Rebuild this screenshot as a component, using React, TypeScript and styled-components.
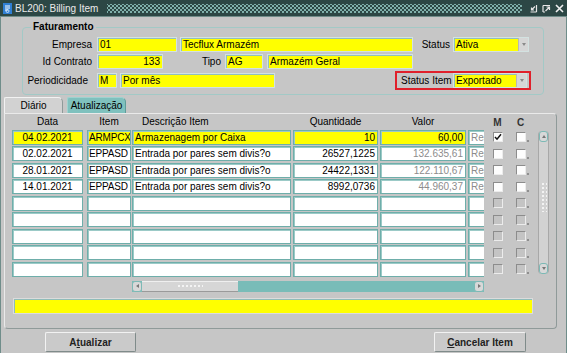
import React from 'react';
import styled, { createGlobalStyle } from 'styled-components';

const GlobalStyle = createGlobalStyle`
  html, body {
    margin: 0;
    padding: 0;
    background: #c6c6c6;
  }
  body {
    font-family: 'Liberation Sans', Arial, sans-serif;
    font-size: 10px;
    color: #000;
  }
  * {
    box-sizing: border-box;
  }
`;

const Window = styled.div`
  width: 567px;
  height: 353px;
  overflow: hidden;
  display: flex;
  flex-direction: column;
  background: #c6c6c6;
`;

const TitleBar = styled.div`
  height: 17px;
  flex: none;
  display: flex;
  align-items: center;
  gap: 3px;
  padding: 0 3px;
  background: #2c4745;
  border-bottom: 1px solid #6f8d8a;
  color: #eaeaea;
`;

const TitleText = styled.span`
  font-size: 10px;
  white-space: nowrap;
  margin-right: 6px;
`;

const TitleDots = styled.div`
  flex: 1;
  height: 9px;
  background-image: radial-gradient(circle, #7fb0ab 0.9px, transparent 1.1px),
    radial-gradient(circle, #7fb0ab 0.9px, transparent 1.1px);
  background-size: 4px 4px;
  background-position: 0 0, 2px 2px;
`;

const TitleButtons = styled.div`
  display: flex;
  gap: 4px;
  margin-left: 4px;
`;

const Body = styled.div`
  flex: 1;
  display: flex;
  flex-direction: column;
  border-left: 1px solid #6f8d8a;
  border-right: 1px solid #6f8d8a;
`;

const Group = styled.fieldset`
  margin: 4px 0 0 21px;
  width: 522px;
  min-width: 0;
  padding: 0 0 4px 0;
  border: 1px solid #a2c9c6;
  border-radius: 4px;
  display: flex;
  flex-direction: column;
  gap: 2px;
`;

const Legend = styled.legend`
  margin-left: 8px;
  padding: 0 2px;
  font-weight: bold;
  line-height: 12px;
`;

const FormRow = styled.div<{ $first?: boolean; $h?: number }>`
  display: flex;
  align-items: center;
  height: ${p => p.$h ?? 15}px;
  margin-top: ${p => (p.$first ? 4 : 0)}px;
`;

const Label = styled.span<{ $w?: number; $gap?: number }>`
  width: ${p => (p.$w ? `${p.$w}px` : 'auto')};
  flex: none;
  text-align: right;
  padding-right: ${p => p.$gap ?? 5}px;
  white-space: nowrap;
  line-height: 13px;
`;

const Field = styled.div<{ $w: number; $bg?: string; $align?: string; $ml?: number; $muted?: boolean }>`
  width: ${p => p.$w}px;
  height: 15px;
  flex: none;
  margin-left: ${p => p.$ml ?? 0}px;
  padding: 0 2px;
  background: ${p => p.$bg ?? '#fff'};
  border: 1px solid #d3e2e1;
  box-shadow: inset 1px 1px 0 #92bfbc;
  text-align: ${p => p.$align ?? 'left'};
  line-height: 13px;
  white-space: nowrap;
  overflow: hidden;
  color: ${p => (p.$muted ? '#8c8c8c' : '#000')};
`;

const Select = styled.div<{ $w: number }>`
  width: ${p => p.$w}px;
  height: 15px;
  flex: none;
  display: flex;
  border: 1px solid #d3e2e1;
  box-shadow: inset 1px 1px 0 #92bfbc;
  background: #ffff00;
`;

const SelectValue = styled.span`
  flex: 1;
  padding: 0 2px;
  line-height: 13px;
`;

const SelectArrow = styled.span`
  width: 10px;
  background: #d6d6d6;
  border-left: 1px solid #b8b8b8;
  display: flex;
  align-items: center;
  justify-content: center;
  &::after {
    content: '';
    border-left: 2.5px solid transparent;
    border-right: 2.5px solid transparent;
    border-top: 3px solid #8a8a8a;
  }
`;

const Highlight = styled.div`
  margin-left: 120px;
  width: 136px;
  height: 19px;
  display: flex;
  align-items: center;
  padding-left: 4px;
  border: 2px solid #e0202b;
`;

const TabStrip = styled.div`
  display: flex;
  gap: 4px;
  margin: 2px 0 0 3px;
  height: 16px;
`;

const Tab = styled.div<{ $active?: boolean }>`
  width: 59px;
  height: 16px;
  display: flex;
  align-items: center;
  justify-content: center;
  border-radius: 2px 5px 0 0;
  background: ${p => (p.$active ? '#d2d2d2' : '#7fc1be')};
  border-top: 1px solid ${p => (p.$active ? '#f2f2f2' : '#9fd2cf')};
  border-left: 1px solid ${p => (p.$active ? '#f2f2f2' : '#9fd2cf')};
  border-right: 1px solid ${p => (p.$active ? '#8f9a99' : '#5e9c99')};
  line-height: 13px;
`;

const TabPanel = styled.div`
  margin-left: 3px;
  width: 553px;
  height: 216px;
  padding: 2px 0 0 7px;
  border: 1px solid #eaeaea;
  border-right-color: #8f9a99;
  border-bottom-color: #8f9a99;
  border-radius: 0 4px 4px 4px;
  display: flex;
  flex-direction: column;
`;

const GridArea = styled.div`
  display: flex;
  align-items: flex-start;
`;

const Block = styled.div`
  display: flex;
  flex-direction: column;
  margin-left: 1px;
`;

const Grid = styled.div<{ $cols: string; $gap: number }>`
  display: grid;
  grid-template-columns: ${p => p.$cols};
  grid-template-rows: 12px repeat(9, 15px);
  column-gap: ${p => p.$gap}px;
  row-gap: 1.5px;
`;

const Head = styled.div<{ $align?: string; $pad?: number }>`
  text-align: ${p => p.$align ?? 'center'};
  padding-left: ${p => p.$pad ?? 0}px;
  line-height: 11px;
  white-space: nowrap;
`;

const Cell = styled.div<{ $yellow?: boolean; $align?: string; $muted?: boolean; $clip?: boolean; $tight?: boolean }>`
  height: 15px;
  padding: 0 ${p => (p.$tight ? '0 0 1px' : '2px')};
  background: ${p => (p.$yellow ? '#ffff00' : '#fff')};
  border: 1px solid #6eaeaa;
  border-right-width: ${p => (p.$clip ? 0 : 1)}px;
  box-shadow: inset 1px 1px 0 #9ccac7;
  text-align: ${p => p.$align ?? 'left'};
  letter-spacing: ${p => (p.$tight ? '-0.15px' : 'normal')};
  line-height: 13px;
  white-space: nowrap;
  overflow: hidden;
  color: ${p => (p.$muted ? '#8c8c8c' : '#000')};
`;

const HScroll = styled.div`
  margin-top: 4px;
  width: 352px;
  height: 11px;
  display: flex;
  background: #79bcb8;
`;

const ScrollButton = styled.div<{ $dir: 'left' | 'right' | 'up' | 'down' }>`
  width: ${p => (p.$dir === 'left' || p.$dir === 'right' ? '10px' : '100%')};
  height: ${p => (p.$dir === 'left' || p.$dir === 'right' ? '100%' : '11px')};
  flex: none;
  background: #d8d8d8;
  border: 1px solid #7cb9b5;
  border-radius: 3px;
  display: flex;
  align-items: center;
  justify-content: center;
  &::after {
    content: '';
    ${p =>
      p.$dir === 'left'
        ? 'border-top: 2.5px solid transparent; border-bottom: 2.5px solid transparent; border-right: 3px solid #777;'
        : p.$dir === 'right'
        ? 'border-top: 2.5px solid transparent; border-bottom: 2.5px solid transparent; border-left: 3px solid #777;'
        : p.$dir === 'up'
        ? 'border-left: 2.5px solid transparent; border-right: 2.5px solid transparent; border-bottom: 3px solid #777;'
        : 'border-left: 2.5px solid transparent; border-right: 2.5px solid transparent; border-top: 3px solid #777;'}
  }
`;

const HThumb = styled.div`
  width: 96px;
  background: #d6d6d6;
  border-top: 1px solid #efefef;
  border-bottom: 1px solid #9a9a9a;
  display: flex;
  align-items: center;
  justify-content: center;
`;

const Grip = styled.div<{ $vertical?: boolean }>`
  width: ${p => (p.$vertical ? 6 : 26)}px;
  height: ${p => (p.$vertical ? 30 : 5)}px;
  background-image: radial-gradient(circle, #f4f4f4 0.7px, transparent 0.9px);
  background-size: 4px 4px;
`;

const HTrack = styled.div`
  flex: 1;
`;

const CheckGrid = styled.div`
  margin-left: 2px;
  display: grid;
  grid-template-columns: 23px 23px;
  grid-template-rows: 12px repeat(9, 15px);
  row-gap: 1.5px;
  justify-items: center;
  align-items: center;
`;

const CheckHead = styled.div`
  font-weight: bold;
  color: #333;
  line-height: 11px;
`;

const CheckBox = styled.span<{ $empty?: boolean; $dot?: boolean }>`
  position: relative;
  width: 10px;
  height: 10px;
  display: flex;
  align-items: center;
  justify-content: center;
  background: ${p => (p.$empty ? '#c4c4c4' : '#fdfdfd')};
  border-top: 1px solid #8c8c8c;
  border-left: 1px solid #8c8c8c;
  border-bottom: 1px solid #ececec;
  border-right: 1px solid #ececec;
  &::after {
    content: '';
    display: ${p => (p.$dot ? 'block' : 'none')};
    position: absolute;
    right: -4px;
    bottom: -1px;
    width: 2px;
    height: 2px;
    background: #8e8e8e;
  }
`;

const VScroll = styled.div`
  margin: 15px 0 0 6px;
  width: 11px;
  height: 143px;
  display: flex;
  flex-direction: column;
  background: #d2d2d2;
  border-left: 1px solid #a8a8a8;
  border-right: 1px solid #a8a8a8;
  border-radius: 4px;
`;

const VTrack = styled.div`
  flex: 1;
  display: flex;
  justify-content: center;
  padding-top: 40px;
`;

const MessageBar = styled.div`
  margin: 6px 0 0 1px;
  width: 520px;
  height: 16px;
  background: #ffff00;
  border: 1px solid #dcdcdc;
  box-shadow: inset 1px 1px 0 #8fbcb9;
`;

const ButtonRow = styled.div`
  display: flex;
  justify-content: space-between;
  margin: 3px 40px 0 44px;
`;

const Button = styled.button<{ $w?: number }>`
  width: ${p => p.$w ?? 91}px;
  height: 20px;
  padding: 0;
  font-family: 'Liberation Sans', Arial, sans-serif;
  font-size: 10px;
  font-weight: bold;
  color: #222;
  background: #cacaca;
  border-top: 1px solid #f2f2f2;
  border-left: 1px solid #f2f2f2;
  border-bottom: 1px solid #7f8b8a;
  border-right: 1px solid #7f8b8a;
  border-radius: 2px;
`;

type Row = {
  date: string;
  item: string;
  desc: string;
  qty: string;
  valor: string;
  m?: boolean;
  current?: boolean;
};

const DESC = 'Entrada por pares sem divis?o';

const rows: Row[] = [
  { date: '04.02.2021', item: 'ARMPCX', desc: 'Armazenagem por Caixa', qty: '10', valor: '60,00', m: true, current: true },
  { date: '02.02.2021', item: 'EPPASD', desc: DESC, qty: '26527,1225', valor: '132.635,61' },
  { date: '28.01.2021', item: 'EPPASD', desc: DESC, qty: '24422,1331', valor: '122.110,67' },
  { date: '14.01.2021', item: 'EPPASD', desc: DESC, qty: '8992,0736', valor: '44.960,37' },
];

const allRows: (Row | null)[] = [...rows, null, null, null, null, null];

const FormIcon = () => (
  <svg width="9" height="11" viewBox="0 0 9 11">
    <rect x="0" y="0" width="9" height="11" fill="#2f7fd4" />
    <path d="M2 3h5M2 5h5M2 7h3" stroke="#fff" strokeWidth="1" />
    <circle cx="4.5" cy="8" r="1.5" fill="none" stroke="#dfefff" strokeWidth="0.8" />
  </svg>
);

const MinIcon = () => (
  <svg width="9" height="9" viewBox="0 0 9 9">
    <path d="M1.5 8h6M7.5 1v7" stroke="#e6e6e6" strokeWidth="1.2" />
    <path d="M6 2.5L2.5 6M2.5 3.5V6H5" stroke="#e6e6e6" strokeWidth="1.2" fill="none" />
  </svg>
);

const RestoreIcon = () => (
  <svg width="9" height="9" viewBox="0 0 9 9">
    <path d="M1 1.5h7M1 1.5v6.5M1 8h2" stroke="#e6e6e6" strokeWidth="1.2" fill="none" />
    <path d="M3.5 7L7.5 3M4.5 3h3v3" stroke="#e6e6e6" strokeWidth="1.2" fill="none" />
  </svg>
);

const CloseIcon = () => (
  <svg width="9" height="9" viewBox="0 0 9 9">
    <path d="M1 1l7 7M8 1L1 8" stroke="#f0f0f0" strokeWidth="1.6" />
  </svg>
);

const Check = () => (
  <svg width="8" height="8" viewBox="0 0 8 8">
    <path d="M1 4l2 2.2L7 1.2" stroke="#111" strokeWidth="1.5" fill="none" />
  </svg>
);

const App = () => {
  return (
    <>
      <GlobalStyle />
      <Window>
        <TitleBar>
          <FormIcon />
          <TitleText>BL200: Billing Item</TitleText>
          <TitleDots />
          <TitleButtons>
            <MinIcon />
            <RestoreIcon />
            <CloseIcon />
          </TitleButtons>
        </TitleBar>

        <Body>
          <Group>
            <Legend>Faturamento</Legend>
            <FormRow $first>
              <Label $w={74}>Empresa</Label>
              <Field $w={80} $bg="#ffff00">01</Field>
              <Field $w={233} $bg="#ffff00" $ml={3}>Tecflux Armazém</Field>
              <Label $w={40} $gap={3}>Status</Label>
              <Select $w={76}>
                <SelectValue>Ativa</SelectValue>
                <SelectArrow />
              </Select>
            </FormRow>
            <FormRow>
              <Label $w={74}>Id Contrato</Label>
              <Field $w={66} $bg="#ffff00" $align="right">133</Field>
              <Label $w={62} $gap={4}>Tipo</Label>
              <Field $w={38} $bg="#ffff00">AG</Field>
              <Field $w={146} $bg="#ffff00" $ml={4}>Armazém Geral</Field>
            </FormRow>
            <FormRow $h={19}>
              <Label $w={74} $gap={9}>Periodicidade</Label>
              <Field $w={20} $bg="#ffff00">M</Field>
              <Field $w={155} $bg="#ffff00" $ml={3}>Por mês</Field>
              <Highlight>
                <Label $w={52}>Status Item</Label>
                <Select $w={74}>
                  <SelectValue>Exportado</SelectValue>
                  <SelectArrow />
                </Select>
              </Highlight>
            </FormRow>
          </Group>

          <TabStrip>
            <Tab $active>Diário</Tab>
            <Tab>Atualização</Tab>
          </TabStrip>

          <TabPanel>
            <GridArea>
              <Grid $cols="71px 44px" $gap={4}>
                <Head>Data</Head>
                <Head>Item</Head>
                {allRows.map((r, i) => (
                  <React.Fragment key={i}>
                    <Cell $yellow={r?.current} $align="center">{r?.date}</Cell>
                    <Cell $yellow={r?.current} $tight>{r?.item}</Cell>
                  </React.Fragment>
                ))}
              </Grid>

              <Block>
                <Grid $cols="159px 85px 86px 16px" $gap={2}>
                  <Head $align="left" $pad={10}>Descrição Item</Head>
                  <Head>Quantidade</Head>
                  <Head>Valor</Head>
                  <Head />
                  {allRows.map((r, i) => (
                    <React.Fragment key={i}>
                      <Cell $yellow={r?.current}>{r?.desc}</Cell>
                      <Cell $yellow={r?.current} $align="right">{r?.qty}</Cell>
                      <Cell $yellow={r?.current} $align="right" $muted={!r?.current}>{r?.valor}</Cell>
                      <Cell $clip $muted>{r ? 'Rea' : ''}</Cell>
                    </React.Fragment>
                  ))}
                </Grid>
                <HScroll>
                  <ScrollButton $dir="left" />
                  <HThumb>
                    <Grip />
                  </HThumb>
                  <HTrack />
                  <ScrollButton $dir="right" />
                </HScroll>
              </Block>

              <CheckGrid>
                <CheckHead>M</CheckHead>
                <CheckHead>C</CheckHead>
                {allRows.map((r, i) => (
                  <React.Fragment key={i}>
                    <CheckBox $empty={!r}>{r?.m && <Check />}</CheckBox>
                    <CheckBox $empty={!r} $dot />
                  </React.Fragment>
                ))}
              </CheckGrid>

              <VScroll>
                <ScrollButton $dir="up" />
                <VTrack>
                  <Grip $vertical />
                </VTrack>
                <ScrollButton $dir="down" />
              </VScroll>
            </GridArea>

            <MessageBar />
          </TabPanel>

          <ButtonRow>
            <Button>
              A<u>t</u>ualizar
            </Button>
            <Button $w={92}>
              <u>C</u>ancelar Item
            </Button>
          </ButtonRow>
        </Body>
      </Window>
    </>
  );
};

export default App;
